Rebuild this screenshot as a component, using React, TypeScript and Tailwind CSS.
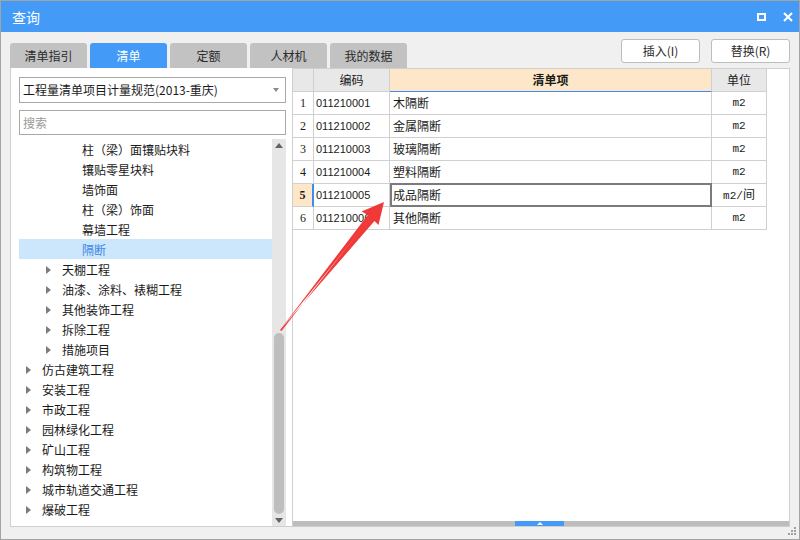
import React from "react";

const CJK = '"Noto Sans CJK SC", "Noto Sans", sans-serif';

type Node = { t: string; lv: 1 | 2 | 3; sel?: boolean };
const tree: Node[] = [
  { t: "柱（梁）面镶贴块料", lv: 3 },
  { t: "镶贴零星块料", lv: 3 },
  { t: "墙饰面", lv: 3 },
  { t: "柱（梁）饰面", lv: 3 },
  { t: "幕墙工程", lv: 3 },
  { t: "隔断", lv: 3, sel: true },
  { t: "天棚工程", lv: 2 },
  { t: "油漆、涂料、裱糊工程", lv: 2 },
  { t: "其他装饰工程", lv: 2 },
  { t: "拆除工程", lv: 2 },
  { t: "措施项目", lv: 2 },
  { t: "仿古建筑工程", lv: 1 },
  { t: "安装工程", lv: 1 },
  { t: "市政工程", lv: 1 },
  { t: "园林绿化工程", lv: 1 },
  { t: "矿山工程", lv: 1 },
  { t: "构筑物工程", lv: 1 },
  { t: "城市轨道交通工程", lv: 1 },
  { t: "爆破工程", lv: 1 },
];

const rows = [
  { n: "1", c: "011210001", name: "木隔断", u: "m2" },
  { n: "2", c: "011210002", name: "金属隔断", u: "m2" },
  { n: "3", c: "011210003", name: "玻璃隔断", u: "m2" },
  { n: "4", c: "011210004", name: "塑料隔断", u: "m2" },
  { n: "5", c: "011210005", name: "成品隔断", u: "m2/间", sel: true },
  { n: "6", c: "011210006", name: "其他隔断", u: "m2" },
];

function Caret() {
  return (
    <div className="w-0 h-0 border-y-[4px] border-y-transparent border-l-[5px] border-l-[#7c7c7c]" />
  );
}

function Tab({ label, active }: { label: string; active?: boolean }) {
  return (
    <div
      className={
        "w-[77px] h-[25px] rounded-t-[3px] flex items-center justify-center text-[12px] " +
        (active ? "bg-[#449bf7] text-white" : "bg-[#c2c2c2] text-[#2a2a2a]")
      }
    >
      {label}
    </div>
  );
}

export default function App() {
  return (
    <div
      className="relative w-[800px] h-[540px] border border-[#a3a3a3] bg-[#f0f0f0] flex flex-col overflow-hidden"
      style={{ fontFamily: CJK }}
    >
      {/* title bar */}
      <div className="h-[31px] bg-[#449bf7] flex items-center justify-between pl-[11px] pr-[6px] text-white">
        <span className="text-[14px] leading-none">查询</span>
        <div className="flex items-center gap-[17px]">
          <div className="w-[9px] h-[8px] border-2 border-white" />
          <svg width="10" height="10" viewBox="0 0 10 10">
            <path d="M1 1 L9 9 M9 1 L1 9" stroke="white" strokeWidth="2" />
          </svg>
        </div>
      </div>

      {/* tabs row */}
      <div className="h-[36px] flex justify-between px-[9px]">
        <div className="flex items-end gap-[3px]">
          <Tab label="清单指引" />
          <Tab label="清单" active />
          <Tab label="定额" />
          <Tab label="人材机" />
          <Tab label="我的数据" />
        </div>
        <div className="flex items-start gap-[11px] pt-[7px]">
          <div className="w-[79px] h-[24px] bg-white border border-[#bdbdbd] rounded-[3px] flex items-center justify-center text-[12px] text-[#2a2a2a]">
            插入(I)
          </div>
          <div className="w-[79px] h-[24px] bg-white border border-[#bdbdbd] rounded-[3px] flex items-center justify-center text-[12px] text-[#2a2a2a]">
            替换(R)
          </div>
        </div>
      </div>

      {/* panels */}
      <div className="h-[459px] flex px-[9px]">
        {/* left panel */}
        <div className="w-[282px] h-full bg-white border-l border-b border-[#cfcfcf] flex flex-col pl-[8px] pr-[6px]">
          <div className="mt-[9px] h-[26px] border border-[#a9a9a9] flex items-center justify-between pl-[3px] pr-[6px] text-[12px] text-[#1a1a1a]">
            <span>工程量清单项目计量规范(2013-重庆)</span>
            <div className="w-0 h-0 border-x-[3px] border-x-transparent border-t-[4px] border-t-[#8a8a8a]" />
          </div>
          <div className="mt-[7px] h-[25px] border border-[#a9a9a9] flex items-center pl-[3px] text-[12px] text-[#9a9a9a]">
            搜索
          </div>
          <div className="mt-[4px] flex-1 flex min-h-0">
            <div className="flex-1 flex flex-col overflow-hidden">
              {tree.map((n, i) => (
                <div
                  key={i}
                  className={
                    "h-[20px] shrink-0 flex items-center pt-[1px] text-[12px] " +
                    (n.sel ? "bg-[#cce6fc] text-[#3f86e6]" : "text-[#1a1a1a]")
                  }
                >
                  {n.lv === 3 && <span className="pl-[63px]">{n.t}</span>}
                  {n.lv === 2 && (
                    <div className="flex items-center pl-[27px]">
                      <Caret />
                      <span className="ml-[11px]">{n.t}</span>
                    </div>
                  )}
                  {n.lv === 1 && (
                    <div className="flex items-center pl-[7px]">
                      <Caret />
                      <span className="ml-[11px]">{n.t}</span>
                    </div>
                  )}
                </div>
              ))}
            </div>
            <div className="w-[14px] h-full bg-[#e6e6e6] flex flex-col items-center">
              <div className="mt-[4px] w-0 h-0 border-x-[4px] border-x-transparent border-b-[5px] border-b-[#636363]" />
              <div className="flex-1" />
              <div className="w-[10px] h-[181px] rounded-[5px] bg-[#bebebe]" />
              <div className="mt-[4px] mb-[3px] w-0 h-0 border-x-[4px] border-x-transparent border-t-[5px] border-t-[#636363]" />
            </div>
          </div>
        </div>

        {/* right panel */}
        <div className="flex-1 h-full bg-white border border-[#cfcfcf] flex flex-col">
          <div className="flex flex-col w-[474px]">
            {/* header */}
            <div className="flex h-[23px] text-[12px] text-[#1a1a1a]">
              <div className="w-[21px] bg-[#e8e8e8] border-r border-b border-[#d0d0d0]" />
              <div className="w-[76px] bg-[#e8e8e8] border-r border-b border-[#d0d0d0] flex items-center justify-center">
                编码
              </div>
              <div className="w-[322px] bg-[#fde7c8] border-r border-[#d0d0d0] border-b border-b-[#3d8cf0] flex items-center justify-center font-bold">
                清单项
              </div>
              <div className="w-[55px] bg-[#e8e8e8] border-r border-b border-[#d0d0d0] flex items-center justify-center">
                单位
              </div>
            </div>
            {rows.map((r) => (
              <div key={r.n} className="flex h-[23px] text-[#1a1a1a]">
                <div
                  className={
                    "w-[21px] border-b border-[#d0d0d0] flex items-center justify-center text-[12px] " +
                    (r.sel
                      ? "bg-[#fde7c8] font-bold border-r-2 border-r-[#3d8cf0]"
                      : "border-r")
                  }
                  style={{ fontFamily: '"Liberation Serif", serif' }}
                >
                  {r.n}
                </div>
                <div
                  className="w-[76px] border-r border-b border-[#d0d0d0] flex items-center pl-[2px] text-[11px] whitespace-nowrap overflow-hidden"
                  style={{ fontFamily: '"Liberation Sans", sans-serif' }}
                >
                  {r.c}
                </div>
                <div className="relative w-[322px] border-r border-b border-[#d0d0d0] flex items-center pl-[3px] text-[12px]">
                  {r.sel && (
                    <div className="absolute left-[0px] top-[-1px] right-[-1px] bottom-[-1px] border-2 border-[#7b7b7b]" />
                  )}
                  {r.name}
                </div>
                <div
                  className="w-[55px] border-r border-b border-[#d0d0d0] flex items-center justify-center text-[11px]"
                  style={{ fontFamily: '"Liberation Mono", "Noto Sans CJK SC", monospace' }}
                >
                  {r.u === "m2/间" ? (
                    <span>
                      m2/<span className="text-[12px]" style={{ fontFamily: CJK }}>间</span>
                    </span>
                  ) : (
                    r.u
                  )}
                </div>
              </div>
            ))}
          </div>
          <div className="flex-1" />
          <div className="h-[5px] bg-[#bdbdbd] flex">
            <div className="w-[222px]" />
            <div className="w-[49px] h-full bg-[#449bf7] flex items-center justify-center">
              <div className="w-0 h-0 border-x-[3px] border-x-transparent border-b-[3px] border-b-white" />
            </div>
          </div>
        </div>
      </div>

      {/* resize grip */}
      <svg className="absolute right-[2px] bottom-[3px]" width="9" height="9" viewBox="0 0 9 9">
        <rect x="6" y="0" width="2" height="2" fill="#a0a0a0" />
        <rect x="3" y="3" width="2" height="2" fill="#a0a0a0" />
        <rect x="6" y="3" width="2" height="2" fill="#a0a0a0" />
        <rect x="0" y="6" width="2" height="2" fill="#a0a0a0" />
        <rect x="3" y="6" width="2" height="2" fill="#a0a0a0" />
        <rect x="6" y="6" width="2" height="2" fill="#a0a0a0" />
      </svg>

      {/* red arrow annotation */}
      <svg
        className="absolute left-[-1px] top-[-1px] pointer-events-none"
        width="800"
        height="540"
        viewBox="0 0 800 540"
      >
        <polygon
          points="280,330 281.5,331 370.5,217 367,214.5 361.5,211.5 384,202 378.5,225 374.5,221"
          fill="#f03a3a"
        />
        <polygon points="280,330 372,216.5 368.5,214 " fill="#f03a3a" />
      </svg>
    </div>
  );
}
